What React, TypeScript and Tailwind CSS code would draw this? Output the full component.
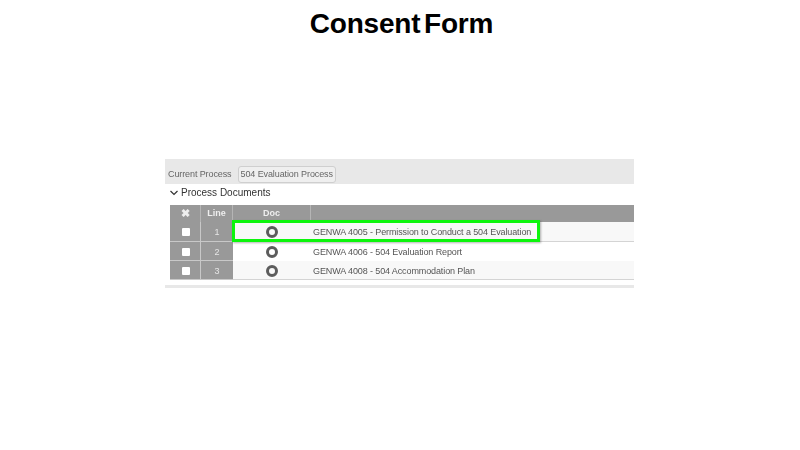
const rows = [
  { line: "1", name: "GENWA 4005 - Permission to Conduct a 504 Evaluation", bg: "bg-[#f8f8f8]", h: "h-[20px]", line2: "border-[#d4d4d4]", pad: "pt-[2px]" },
  { line: "2", name: "GENWA 4006 - 504 Evaluation Report", bg: "bg-white", h: "h-[19px]", line2: "border-white", pad: "pt-[3px]" },
  { line: "3", name: "GENWA 4008 - 504 Accommodation Plan", bg: "bg-[#f8f8f8]", h: "h-[19px]", line2: "border-[#d4d4d4]", pad: "pt-[3px]" },
];

type DocRowProps = { line: string; name: string; bg: string; h: string; line2: string; pad: string };

const DocRow = ({ line, name, bg, h, line2, pad }: DocRowProps) => (
  <div className={`flex ${h} ${bg}`}>
    <div className="flex w-[31px] items-center justify-center border-r border-b border-[#c8c8c8] bg-[#999999] pt-[1px] pl-[1px]">
      <span className="h-[8px] w-[8px] rounded-[1px] bg-white" />
    </div>
    <div className={`flex w-[32px] items-center justify-center border-b border-[#c8c8c8] bg-[#999999] text-[9px] text-[#e6e6e6] ${pad}`}>
      {line}
    </div>
    <div className={`flex w-[78px] items-center justify-center border-b pt-[1px] ${line2}`}>
      <span className="h-[12px] w-[12px] rounded-full border-[3px] border-[#5c5c5c]" />
    </div>
    <div className={`flex flex-1 items-center border-b pl-[2px] text-[9px] tracking-[-0.11px] text-[#555555] ${line2} ${pad}`}>
      {name}
    </div>
  </div>
);

export default function App() {
  return (
    <div className="h-[450px] w-[800px] overflow-hidden bg-white font-['Liberation_Sans',Arial,sans-serif]">
      <h1 className="flex h-[159px] justify-center pt-[8px] pl-[3px] text-[28px] leading-[32px] font-bold tracking-[-0.2px] text-black [word-spacing:-4px]">
        Consent Form
      </h1>

      <div className="ml-[165px] w-[469px] blur-[0.4px]">
        <div className="flex h-[25px] items-end gap-[3px] bg-[#e8e8e8] pb-[1px] pl-[3px] text-[9px] tracking-[-0.1px] text-[#666666]">
          <span className="pb-[2px]">Current Process</span>
          <span className="ml-[3px] flex h-[17px] items-center rounded-[3px] border border-[#cfcfcf] bg-[#efefef] px-[2px]">
            504 Evaluation Process
          </span>
        </div>

        <div className="bg-white px-[5px] pb-[5px]">
          <div className="flex h-[21px] items-center gap-[3px] pb-[5px] text-[10px] text-[#333333]">
            <svg width="8" height="6" viewBox="0 0 8 6" fill="none" stroke="#333333" strokeWidth="1.2" className="mt-[1px]">
              <path d="M.5 1L4 4.5 7.5 1" />
            </svg>
            <span>Process Documents</span>
          </div>

          <div className="relative w-[464px]">
            <div className="flex h-[17px] bg-[#999999] text-[9px] font-bold text-[#eeeeee]">
              <div className="flex w-[31px] items-center justify-center border-r border-[#b5b5b5] text-[11px]">✖</div>
              <div className="flex w-[32px] items-center justify-center border-r border-[#b5b5b5] pt-[1px]">Line</div>
              <div className="flex w-[78px] items-center justify-center border-r border-[#b5b5b5] pt-[1px]">Doc</div>
            </div>
            {rows.map((row) => (
              <DocRow key={row.line} {...row} />
            ))}
            <div className="absolute top-[15px] left-[62px] h-[22px] w-[308px] border-[3px] border-[#0cf50c] shadow-[1px_1px_2px_rgba(0,0,0,0.3)]" />
          </div>
        </div>

        <div className="h-[3px] bg-[#e8e8e8]" />
      </div>
    </div>
  );
}
